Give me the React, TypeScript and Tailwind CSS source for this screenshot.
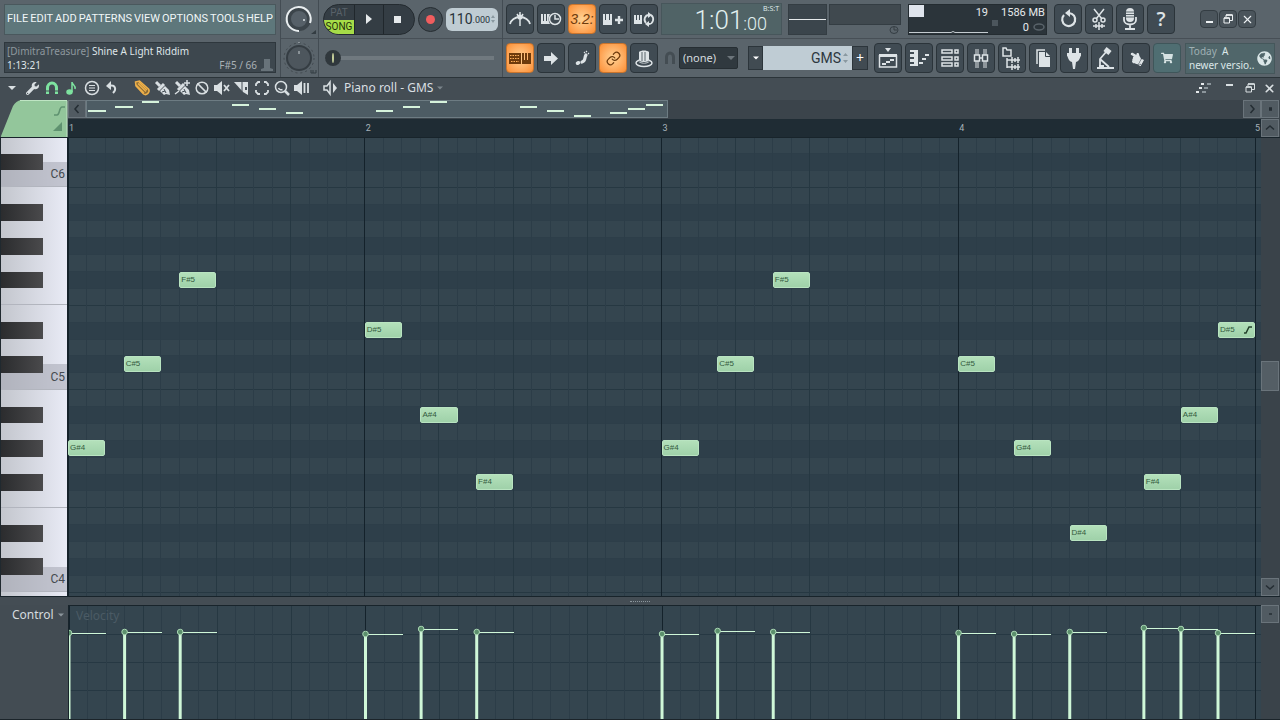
import type { ReactNode } from 'react';
import {
    Ban,
    Link,
    X,
} from 'lucide-react';
import { FaGlobeAmericas, FaHandPointLeft, FaShoppingCart, FaWrench } from 'react-icons/fa';

interface Note {
    name: string;
    step: number;
    pitch: number;
    velocity: number;
    slide?: boolean;
}

// pitch is a MIDI note number, step is a 16th from the start of the pattern
const NOTES: Note[] = [
    { name: 'G#4', step: 0, pitch: 56, velocity: 86 },
    { name: 'C#5', step: 3, pitch: 61, velocity: 87 },
    { name: 'F#5', step: 6, pitch: 66, velocity: 87 },
    { name: 'D#5', step: 16, pitch: 63, velocity: 85 },
    { name: 'A#4', step: 19, pitch: 58, velocity: 90 },
    { name: 'F#4', step: 22, pitch: 54, velocity: 87 },
    { name: 'G#4', step: 32, pitch: 56, velocity: 85 },
    { name: 'C#5', step: 35, pitch: 61, velocity: 88 },
    { name: 'F#5', step: 38, pitch: 66, velocity: 87 },
    { name: 'C#5', step: 48, pitch: 61, velocity: 86 },
    { name: 'G#4', step: 51, pitch: 56, velocity: 85 },
    { name: 'D#4', step: 54, pitch: 51, velocity: 87 },
    { name: 'F#4', step: 58, pitch: 54, velocity: 91 },
    { name: 'A#4', step: 60, pitch: 58, velocity: 90 },
    { name: 'D#5', step: 62, pitch: 63, velocity: 86, slide: true },
];

const VISIBLE_STEPS = 64.32;
const VISIBLE_ROWS = 27.15;
const TOP_PITCH = 74;
const TOP_CUT = 0.08;
const LANE_HEIGHT = 113;

const x = (step: number) => `${(step / VISIBLE_STEPS) * 100}%`;
const rowTop = (pitch: number) => `${((TOP_PITCH - pitch - TOP_CUT) / VISIBLE_ROWS) * 100}%`;
const rows = (n: number) => `${(n / VISIBLE_ROWS) * 100}%`;
const isBlack = (pitch: number) => [1, 3, 6, 8, 10].includes(pitch % 12);

const PITCHES = Array.from({ length: 28 }, (_, i) => TOP_PITCH - i);
const STEPS = Array.from({ length: 65 }, (_, i) => i);

/* ---------- icons ---------- */

const Glyph = ({ children }: { children: ReactNode }) => (
    <svg width="28" height="30" viewBox="0 0 28 30" fill="none" stroke="currentColor" strokeWidth="1.5" className="shrink-0">
        {children}
    </svg>
);

const Tool = ({ children }: { children: ReactNode }) => (
    <svg width="18" height="18" viewBox="0 0 18 18" fill="none" stroke="currentColor" strokeWidth="1.5">
        {children}
    </svg>
);

const MetronomeIcon = () => (
    <Glyph>
        <path strokeWidth="1.8" d="M4 20c1-4 5-7 10-7s9 3 10 7" />
        <path d="M14 8v14M11 10l3 5 3-5" />
        <circle cx="14" cy="13" r="1.8" fill="currentColor" />
    </Glyph>
);
const WaitIcon = () => (
    <Glyph>
        <path stroke="none" fill="currentColor" d="M4 10h2v7h1v-7h2v7h1v-7h3c-2 3-2 7 0 10H4z" />
        <circle cx="18" cy="15" r="5.5" />
        <path d="M18 11v4h4" />
    </Glyph>
);
const StepPlusIcon = () => (
    <Glyph>
        <path stroke="none" fill="currentColor" d="M4 10h2v6h1v-6h3v6h1v-6h2v11H4z" />
        <path strokeWidth="2.4" d="M16 16h8M20 12v8" />
    </Glyph>
);
const LoopIcon = () => (
    <Glyph>
        <path stroke="none" fill="currentColor" d="M4 11h2v5h1v-5h2v5h1v-5h2v9H4z" />
        <path strokeWidth="1.8" d="M16 19c-3-3-1-8 3-8M21 11c4 3 2 9-2 9" />
        <path stroke="none" fill="currentColor" d="M18 8l4 3-4 3zM19 17l-4 3 4 3z" />
    </Glyph>
);
const TypingIcon = () => (
    <Glyph>
        <path stroke="none" fill="currentColor" d="M3 10h12v11H3zM16 10h2v7h1v-7h2v7h1v-7h3v11h-9z" />
        <path stroke="#ffb15c" strokeWidth="1" strokeDasharray="1.5 1" d="M4 12.5h10M4 15.5h10M5 18.5h8" />
    </Glyph>
);
const ArrowIcon = () => (
    <Glyph>
        <path stroke="none" fill="currentColor" d="M7 13h7V9l7 6.5-7 6.5v-4H7z" />
    </Glyph>
);
const StepIcon = () => (
    <Glyph>
        <ellipse cx="10" cy="20" rx="2.4" ry="1.8" fill="currentColor" stroke="none" transform="rotate(-25 10 20)" />
        <path strokeWidth="3.2" strokeLinecap="round" d="M14 19c4-1 2-4 4-7" />
        <path strokeWidth="1.2" d="M16 10l1-1M18 9l1-1M20 11l1-1" />
    </Glyph>
);
const HatIcon = () => (
    <Glyph>
        <ellipse cx="14" cy="20" rx="8" ry="3.5" />
        <path stroke="none" fill="currentColor" d="M9 9c2-2 8-2 10 0v10c-2 2-8 2-10 0z" />
        <path stroke="#59646b" strokeWidth="1" d="M12 9v9M15 9v9M9 18c3 2 7 2 10 0" />
    </Glyph>
);
const PlaylistIcon = () => (
    <Glyph>
        <path stroke="none" fill="currentColor" d="M11 5h6l-3 4zM5 11h18v3H5z" />
        <path d="M5.5 12v12h17V12" />
        <path d="M8 21h4M12 19h4M16 17h4" strokeWidth="2" />
    </Glyph>
);
const PianoRollIcon = () => (
    <Glyph>
        <path stroke="none" fill="currentColor" d="M5 7h8v16H5v-2h4v-2H5v-3h4v-2H5v-3h4V9H5z" />
        <path strokeWidth="2.2" d="M14 20h4M17 16h4M20 12h4" />
    </Glyph>
);
const RackIcon = () => (
    <Glyph>
        <path d="M6 7h10v3H6zM6 14h10v3H6zM6 20h10v3H6zM19 7h3v3h-3zM19 14h3v3h-3zM19 20h3v3h-3z" />
    </Glyph>
);
const MixerIcon = () => (
    <Glyph>
        <path strokeWidth="1" d="M9 6v6M11 6v6M9 18v7M11 18v7M17 6v6M19 6v6M17 18v7M19 18v7" />
        <path d="M7.500 12h5v6h-5zM15.500 12h5v6h-5zM12 15h4" />
    </Glyph>
);
const BrowserIcon = () => (
    <Glyph>
        <path d="M5 6v7h8V7H9L8 5H5zM9 15v10M9 17h13M9 24h13" />
        <path d="M14 14v6M17 15v4M20 14v6M14 21v6M17 22v4M20 21v6" />
    </Glyph>
);
const PagesIcon = () => (
    <Glyph>
        <path d="M8 21V7h8" />
        <path stroke="none" fill="currentColor" d="M10 9h7l4 4v11H10z" />
        <path stroke="#38434b" strokeWidth="1" d="M16.5 9v4.500H21" />
    </Glyph>
);
const PlugIcon = () => (
    <Glyph>
        <path stroke="none" fill="currentColor" d="M9 5h3v5h4V5h3v5h2v3c-1 0-1 5-5 6l-1 7h-2l-1-7c-4-1-4-6-5-6v-3h2z" />
    </Glyph>
);
const LeverIcon = () => (
    <Glyph>
        <path strokeWidth="1.8" d="M15 9L9 16v8M9 16l9 8M6 25h17M8 23h5" />
        <path strokeWidth="5" d="M14 6l5 4" />
    </Glyph>
);
const TrimIcon = () => (
    <Glyph>
        <path d="M9 5l8 10M19 5l-8 10" />
        <circle cx="10" cy="16" r="2" />
        <circle cx="18" cy="16" r="2" />
        <path d="M8 22h12M11 20v4M14 18v8M17 20v4" />
    </Glyph>
);
const MicIcon = () => (
    <Glyph>
        <rect x="10" y="4" width="8" height="14" rx="4" fill="currentColor" stroke="none" />
        <path stroke="#59646b" strokeWidth="1" d="M10 8h8M10 10.500h8M10 13h8" />
        <path d="M8 13v3c0 6 12 6 12 0v-3M14 20v4M9 25h10" strokeWidth="1.8" />
    </Glyph>
);
const CycleIcon = () => (
    <Glyph>
        <path strokeWidth="2.2" d="M10 11a6.500 6.500 0 1 0 5-2" />
        <path stroke="none" fill="currentColor" d="M16 5v8l-5-4z" />
    </Glyph>
);
const BrushIcon = ({ plus }: { plus?: boolean }) => (
    <Tool>
        <path strokeWidth="3" d="M3 3l4 4" />
        <path strokeWidth="3" d="M5 11l6-6" />
        <path stroke="none" fill="currentColor" d="M7 12l5-5 4 4 1 5-4-1-2 1z" />
        <path stroke="#444d54" strokeWidth="1" d="M9 13l3-1M11 10l2 4" />
        {plus && <path d="M11 4h6M14 1v6M2 15l4-3" />}
    </Tool>
);
const SpeakerShape = () => <path stroke="none" fill="currentColor" d="M1 6h3l5-4v14l-5-4H1z" />;

const Caret = ({ className }: { className?: string }) => (
    <svg width="8" height="4" viewBox="0 0 8 4" className={className}>
        <path fill="currentColor" d="M0 0h8L4 4z" />
    </svg>
);

/* ---------- main toolbar ---------- */

interface IconButtonProps {
    label: string;
    children: ReactNode;
    variant?: 'dark' | 'active' | 'shop';
}

const VARIANTS = {
    dark: 'bg-[#404b53] text-[#dde3e6] border-[#2b343a]',
    active: 'bg-radial from-[#ffd394] to-[#fb8d2e] text-[#6e3b0c] border-[#c9742d]',
    shop: 'bg-[#4f6e72] text-[#d5e2e2] border-[#3f565a]',
};

const IconButton = ({ label, children, variant = 'dark' }: IconButtonProps) => (
    <button
        aria-label={label}
        className={`flex h-[30px] w-7 shrink-0 items-center justify-center overflow-hidden rounded-sm border ${VARIANTS[variant]}`}
    >
        {children}
    </button>
);

const MENU = ['FILE', 'EDIT', 'ADD', 'PATTERNS', 'VIEW', 'OPTIONS', 'TOOLS', 'HELP'];

const MenuPanel = () => (
    <div className="flex w-[281px] shrink-0 flex-col border-r border-[#434c53] px-1">
        <nav className="mt-1 flex h-[31px] items-center justify-between border border-[#4a585d] bg-[#5e777b] px-[2px] font-['Roboto',sans-serif] text-[11px] text-[#f0f6f7]">
            {MENU.map((item) => (
                <button key={item}>{item}</button>
            ))}
        </nav>
        <div className="mt-[7px] flex h-[31px] flex-col justify-center border border-[#2e373d] bg-[#3d474e] px-[2px] text-[10px] leading-[14px] text-[#dfe5e8]">
            <div>
                <span className="text-[#8d979d]">[DimitraTreasure]</span> Shine A Light Riddim
            </div>
            <div className="flex justify-between">
                <span>1:13:21</span>
                <span className="flex items-center gap-1 text-[#a9b1b6]">
                    F#5 / 66
                    <svg width="12" height="14" viewBox="0 0 12 14" className="text-[#68737a]">
                        <path fill="currentColor" d="M3 1h6v9l3 1v2H0v-2l3-1z" />
                    </svg>
                </span>
            </div>
        </div>
    </div>
);

const Knobs = () => (
    <div className="flex w-[38px] shrink-0 flex-col border-r border-[#434c53]">
        <div className="flex h-[39px] items-center justify-center border-b border-[#474f56]">
            <svg width="34" height="34" viewBox="0 0 34 34" fill="none" aria-label="Master volume">
                <circle cx="16" cy="17" r="10" fill="#566068" stroke="#3c454b" strokeWidth="4" />
                <path d="M16 29A12 12 0 1 1 27 21" stroke="#e9eef0" strokeWidth="2" />
                <circle cx="21" cy="18" r="1" fill="#dde3e6" />
                <path d="M33 28v4h-5z" fill="#333c42" />
            </svg>
        </div>
        <div className="flex h-[38px] items-center justify-center">
            <svg width="34" height="34" viewBox="0 0 34 34" fill="none" aria-label="Master pitch">
                <circle cx="16" cy="17" r="15" stroke="#41494f" strokeDasharray="2 3" />
                <circle cx="16" cy="17" r="12" fill="#4d565d" stroke="#353d43" strokeWidth="2" />
                <path d="M16 10v3M16 1v1" stroke="#c8cfd3" />
                <path d="M28 29v3h5v-3M30 29v3" stroke="#333c42" />
            </svg>
        </div>
    </div>
);

const Transport = () => (
    <div className="flex w-[184px] shrink-0 flex-col border-r border-[#434c53]">
        <div className="flex h-[39px] items-center gap-[3px] border-b border-[#474f56] pl-1">
            <div className="flex h-[31px] overflow-hidden rounded-full border border-[#242b30] bg-[#343d44]">
                <div className="flex w-[30px] flex-col pt-px text-center font-['Roboto',sans-serif] text-[10px] leading-[14px]">
                    <button className="h-[14px] text-[#59626a]">PAT</button>
                    <button className="h-[14px] bg-[#a6dc48] text-[#22310b]">SONG</button>
                </div>
                <button aria-label="Play" className="flex w-[29px] items-center justify-center border-l border-[#20272c]">
                    <svg width="6" height="10" viewBox="0 0 6 10"><path fill="#e6eaec" d="M0 0l6 5-6 5z" /></svg>
                </button>
                <button aria-label="Stop" className="flex w-[31px] items-center justify-center border-l border-[#20272c] pr-1">
                    <span className="size-[7px] bg-[#e6eaec]" />
                </button>
            </div>
            <button aria-label="Record" className="flex size-[25px] items-center justify-center rounded-full border border-[#262d32] bg-[#414b52]">
                <span className="size-[9px] rounded-full bg-[#f05d5e]" />
            </button>
            <div className="flex h-[23px] w-[52px] items-center justify-center rounded-md bg-[#bfccd3] font-['Roboto',sans-serif] text-[#28333a]">
                <span className="text-[14px]">110</span>
                <span className="pt-1 text-[9px]">.000</span>
                <svg width="4" height="8" viewBox="0 0 4 8" className="ml-px"><path fill="#8998a0" d="M0 3l2-3 2 3zM0 5h4L2 8z" /></svg>
            </div>
        </div>
        <div className="flex h-[38px] items-center pr-2 pl-1.5">
            <input
                type="range"
                aria-label="Song position"
                defaultValue={0}
                className="h-4 w-full appearance-none bg-transparent [&::-webkit-slider-runnable-track]:h-[4px] [&::-webkit-slider-runnable-track]:bg-[#70797f] [&::-webkit-slider-thumb]:-mt-[6px] [&::-webkit-slider-thumb]:size-4 [&::-webkit-slider-thumb]:appearance-none [&::-webkit-slider-thumb]:rounded-full [&::-webkit-slider-thumb]:border-x-[7px] [&::-webkit-slider-thumb]:border-y-[3px] [&::-webkit-slider-thumb]:border-[#30383d] [&::-webkit-slider-thumb]:bg-[#c5cf9b]"
            />
        </div>
    </div>
);

const Recording = () => (
    <div className="flex w-[158px] shrink-0 flex-col">
        <div className="flex h-[39px] items-center gap-[3px] border-b border-[#474f56] pl-[3px]">
            <IconButton label="Metronome"><MetronomeIcon /></IconButton>
            <IconButton label="Wait for input"><WaitIcon /></IconButton>
            <IconButton label="Countdown" variant="active">
                <span className="font-['Liberation_Sans'] text-sm italic">3.2:</span>
            </IconButton>
            <IconButton label="Overdub"><StepPlusIcon /></IconButton>
            <IconButton label="Loop recording"><LoopIcon /></IconButton>
        </div>
        <div className="flex h-[38px] items-center gap-[3px] pl-[3px]">
            <IconButton label="Typing keyboard" variant="active"><TypingIcon /></IconButton>
            <IconButton label="Auto scroll"><ArrowIcon /></IconButton>
            <IconButton label="Step edit"><StepIcon /></IconButton>
            <IconButton label="Link" variant="active"><Link size={15} strokeWidth={2} /></IconButton>
            <IconButton label="Metronome hat"><HatIcon /></IconButton>
        </div>
    </div>
);

const WindowButton = ({ label, children }: { label: string; children: ReactNode }) => (
    <button aria-label={label} className="flex size-[18px] items-center justify-center rounded-sm border border-[#343d43] bg-[#4a545b] text-[#eef2f4]">
        {children}
    </button>
);

const RestoreIcon = () => (
    <svg width="10" height="10" viewBox="0 0 10 10" fill="none" stroke="currentColor">
        <path d="M3 3V1h6.500v5.500H7M1 4h5.500v5H1z" />
        <path strokeWidth="1.5" d="M3 1h6.500M1 4h5.500" />
    </svg>
);

const TopRight = () => (
    <div className="flex h-[39px] items-center border-b border-[#474f56]">
        <div className="flex h-8 w-[121px] shrink-0 justify-end border border-[#47565b] bg-[#506366] font-['Roboto',sans-serif] text-[#e2f0f0]">
            <span className="text-[26px] leading-8 font-light">1:01</span>
            <span className="pt-2 text-[18px] leading-6 font-light">:00</span>
            <span className="-ml-1 pr-0.5 font-['Open_Sans'] text-[7px] leading-[9px]">B:S:T</span>
        </div>
        <div className="ml-1.5 flex h-[31px] w-[39px] items-center border border-[#343d43] bg-[#3b454c]">
            <div className="h-px w-full bg-[#e6eaec]" />
        </div>
        <div className="ml-0.5 flex h-[31px] w-[72px] flex-col items-end">
            <div className="h-[21px] w-full border border-[#343d43] bg-[#40494f]" />
            <svg width="12" height="10" viewBox="0 0 12 10" fill="none" stroke="#343d43">
                <ellipse cx="5" cy="5" rx="4" ry="3.5" /><path d="M5 2v3h3" />
            </svg>
        </div>
        <div className="ml-[7px] flex h-[31px] w-[139px] justify-between border border-[#242c31] bg-[#2b343a] font-['Roboto',sans-serif] text-[11px] leading-[15px] text-[#e6eaec]">
            <div className="flex w-[79px] flex-col justify-between">
                <div className="flex justify-between">
                    <span className="h-3 w-[15px] bg-[#dfe4ec]" />
                    <span>19</span>
                </div>
                <svg viewBox="0 0 79 4" className="h-1 w-full" fill="none" stroke="#c4cbd0"><path d="M0 2.500h42l2-1 2 1h33" /></svg>
            </div>
            <span className="mt-[15px] size-[6px] bg-[#4c565d]" />
            <div className="pr-px text-right whitespace-nowrap">
                1586 MB
                <div className="flex items-center justify-end gap-1">
                    0
                    <svg width="12" height="8" viewBox="0 0 12 8" fill="none" stroke="#59636a" strokeWidth="1.5"><ellipse cx="6" cy="4" rx="5" ry="3" /></svg>
                </div>
            </div>
        </div>
        <div className="ml-[7px] flex gap-[3px]">
            <IconButton label="Undo"><CycleIcon /></IconButton>
            <IconButton label="Cut"><TrimIcon /></IconButton>
            <IconButton label="Record audio"><MicIcon /></IconButton>
            <IconButton label="Help"><span className="font-['Open_Sans'] text-xl leading-7 font-semibold">?</span></IconButton>
        </div>
        <div className="mr-6 ml-auto flex gap-px">
            <WindowButton label="Minimize"><span className="mt-1.5 h-0.5 w-[7px] bg-current" /></WindowButton>
            <WindowButton label="Restore"><RestoreIcon /></WindowButton>
            <WindowButton label="Close"><X size={13} /></WindowButton>
        </div>
    </div>
);

const BottomRight = () => (
    <div className="flex h-[38px] items-center">
        <svg width="12" height="14" viewBox="0 0 12 14" fill="none" stroke="#444d53" strokeWidth="3" className="ml-[3px]">
            <path d="M2.500 13V6a3.500 4 0 0 1 7 0v7" />
        </svg>
        <label className="relative ml-[3px] flex items-center">
            <select aria-label="Snap" className="h-[22px] w-[59px] appearance-none rounded-xs border border-[#262e33] bg-[#30393f] pl-[3px] text-[11px] text-[#d5dbdf]">
                <option>(none)</option>
            </select>
            <Caret className="pointer-events-none absolute right-[3px] text-[#6c757b]" />
        </label>
        <button aria-label="Pattern menu" className="ml-2.5 flex h-6 w-[15px] items-center justify-center border border-[#2c353b] bg-[#414b52] text-white">
            <Caret className="w-1.5" />
        </button>
        <div className="flex h-6 w-[89px] items-center bg-[#bfccd4] pr-1">
            <input aria-label="Pattern" defaultValue="GMS" className="w-full min-w-0 text-right font-['Roboto',sans-serif] text-[14px] text-[#2d383f]" />
            <svg width="5" height="10" viewBox="0 0 5 10" className="ml-0.5 shrink-0"><path fill="#8998a0" d="M0 3l2.500-3L5 3zM0 7h5l-2.500 3z" /></svg>
        </div>
        <button aria-label="Add pattern" className="flex h-6 w-4 items-center justify-center border border-[#2c353b] bg-[#414b52] text-sm text-white">+</button>
        <div className="ml-1.5 flex gap-[3px]">
            <IconButton label="Playlist"><PlaylistIcon /></IconButton>
            <IconButton label="Piano roll"><PianoRollIcon /></IconButton>
            <IconButton label="Channel rack"><RackIcon /></IconButton>
            <IconButton label="Mixer"><MixerIcon /></IconButton>
            <IconButton label="Browser"><BrowserIcon /></IconButton>
            <IconButton label="Project picker"><PagesIcon /></IconButton>
            <IconButton label="Plugins"><PlugIcon /></IconButton>
            <IconButton label="Performance"><LeverIcon /></IconButton>
            <IconButton label="Touch"><FaHandPointLeft size={15} className="rotate-[30deg]" /></IconButton>
            <IconButton label="Shop" variant="shop"><FaShoppingCart size={12} /></IconButton>
        </div>
        <a href="#news" className="mr-[5px] ml-1 flex h-[31px] min-w-0 flex-1 items-center border border-[#45575b] bg-[#50666a] pl-[3px] text-[10px] leading-[14px] text-[#dbe7e8]">
            <span className="min-w-0 flex-1 whitespace-nowrap">
                <span className="text-[#9fb0b3]">Today</span> &nbsp;A
                <br />
                newer versio..
            </span>
            <FaGlobeAmericas size={15} className="mr-[2px] shrink-0" />
        </a>
    </div>
);

/* ---------- piano roll ---------- */

const ToolButton = ({ label, children }: { label: string; children: ReactNode }) => (
    <button aria-label={label} className="flex h-5 w-5 shrink-0 items-center justify-center">
        {children}
    </button>
);

const RollHeader = () => (
    <div className="flex h-[22px] items-center bg-[#444d54] pb-0.5 pl-0.5 text-[#d9dfe2]">
        <ToolButton label="Piano roll menu"><Caret /></ToolButton>
        <ToolButton label="Tools"><FaWrench size={13} /></ToolButton>
        <ToolButton label="Snap to grid">
            <span className="text-[#7ee3a0]">
                <Tool><path strokeWidth="3" d="M4.500 15V9a4.500 5 0 0 1 9 0v6" /><path stroke="#444d54" d="M2 12h14" strokeWidth="1" /></Tool>
            </span>
        </ToolButton>
        <ToolButton label="Stamp">
            <span className="text-[#7ee3a0]">
                <Tool><ellipse cx="6.5" cy="13" rx="2.5" ry="2" fill="currentColor" /><path d="M9 13V3c0 3 4 3 3 7" /></Tool>
            </span>
        </ToolButton>
        <ToolButton label="Options"><Tool><circle cx="9" cy="9" r="6.5" /><path d="M6 6.500h6M6 9h6M6 11.500h6" strokeWidth="1.2" /></Tool></ToolButton>
        <ToolButton label="Undo"><Tool><path strokeWidth="2" d="M6 7c6-2 8 3 4 7" /><path fill="currentColor" stroke="none" d="M8 2v9L3 7z" /></Tool></ToolButton>
        <div className="w-2.5" />
        <ToolButton label="Draw">
            <span className="text-[#eeb04a]">
                <Tool><path d="M2.500 3l4-1 9 8c2 3-2 7-5 5L3 7z" fill="#8a6a34" /><path d="M6 3l8 8M3 6l8 8M5 4.500l8 8" /></Tool>
            </span>
        </ToolButton>
        <ToolButton label="Paint"><BrushIcon /></ToolButton>
        <ToolButton label="Paint sequence"><BrushIcon plus /></ToolButton>
        <ToolButton label="Delete"><Ban size={14} strokeWidth={2.5} /></ToolButton>
        <ToolButton label="Mute"><Tool><SpeakerShape /><path d="M11 6l5 6M16 6l-5 6" strokeWidth="1.8" /></Tool></ToolButton>
        <ToolButton label="Slice"><Tool><path fill="currentColor" stroke="none" d="M1 3h14v13l-5-3z" /><path stroke="#444d54" d="M9 3v10" strokeWidth="1" /><path fill="#444d54" stroke="none" d="M12 8h2v3h-2z" /></Tool></ToolButton>
        <ToolButton label="Select"><Tool><path d="M3 7V5l2-2h2M11 3h2l2 2v2M15 11v2l-2 2h-2M7 15H5l-2-2v-2" strokeWidth="1.8" /></Tool></ToolButton>
        <ToolButton label="Zoom"><Tool><circle cx="8" cy="8" r="5.5" /><path d="M5.500 9a3 3 0 0 0 4 1.500" /><path strokeWidth="2.5" d="M12 12l4 4" /></Tool></ToolButton>
        <ToolButton label="Playback"><Tool><SpeakerShape /><path d="M11.500 4v10M15 4v10" strokeWidth="1.8" /></Tool></ToolButton>
        <button className="ml-2.5 flex items-center gap-1 text-[12px] leading-5">
            <Tool><path d="M2 7h3l3-4v12l-3-4H2z" /><path fill="currentColor" stroke="none" d="M11 4l4 5-4 5z" /></Tool>
            Piano roll - GMS
            <Caret className="w-1.5 text-[#7b858b]" />
        </button>
        <div className="ml-auto flex items-center gap-[5px] pr-1">
            <svg width="16" height="10" viewBox="0 0 16 10" strokeWidth="2" fill="none" className="mr-1">
                <path stroke="#e6eaec" d="M0 9h3M3 5h3M5 1h3" />
                <path stroke="#8c969c" d="M6 9h4M8 5h4M11 1h4" />
            </svg>
            <button aria-label="Minimize piano roll" className="flex size-4 items-start justify-center pt-1"><span className="h-0.5 w-[7px] bg-current" /></button>
            <button aria-label="Restore piano roll" className="flex w-4 justify-center"><RestoreIcon /></button>
            <button aria-label="Close piano roll"><X size={13} strokeWidth={3} /></button>
        </div>
    </div>
);

const ScrollButton = ({ label, d }: { label: string; d: string }) => (
    <button aria-label={label} className="flex h-[18px] w-full items-center justify-center border border-[#6a747b] bg-[#515b62] text-[#242d33]">
        <svg width="10" height="10" viewBox="0 0 10 10" fill="none" stroke="currentColor" strokeWidth="1.5"><path d={d} /></svg>
    </button>
);

const Overview = () => (
    <div className="flex h-[37px]">
        <svg width="68" height="37" viewBox="0 0 68 37" className="shrink-0 bg-[#444d54]">
            <path d="M1 36L13 6Q16 1 21 0h46v37H1z" fill="#93c69b" />
            <path d="M20 .5h47V37" fill="none" stroke="#bfe5c4" />
            <path d="M54 15h3c3 0 2-8 5-8h3" fill="none" stroke="#5f9270" strokeWidth="1.5" />
            <path d="M62 22v9h-9z" fill="#5f9270" />
        </svg>
        <div className="flex min-w-0 flex-1 flex-col">
            <div className="flex h-[19px] bg-[#3b444b] pb-px">
                <div className="w-[18px]"><ScrollButton label="Scroll left" d="M6.500 1L3 5l3.500 4" /></div>
                <div className="flex-1">
                    <div className="relative h-[18px] w-[50.3%] border border-[#6d7c83] bg-[#4d5c64]">
                        {NOTES.map((note) => (
                            <span
                                key={note.step}
                                className="absolute h-0.5 w-[3%] bg-[#d6f3dc]"
                                style={{ left: `${0.2 + note.step * 1.55}%`, top: `${(67 - note.pitch) * 5.7 - 5}%` }}
                            />
                        ))}
                    </div>
                </div>
                <div className="w-[18px]"><ScrollButton label="Scroll right" d="M3.500 1L7 5 3.500 9" /></div>
            </div>
            <div className="flex h-[18px] items-center bg-[#1f2c34] pt-px font-['Roboto',sans-serif] text-[9px] text-[#a6b2b9]">
                {[1, 2, 3, 4].map((bar) => (
                    <span key={bar} className="shrink-0 pl-px" style={{ width: x(16) }}>{bar}</span>
                ))}
                <span>5</span>
            </div>
        </div>
        <div className="flex w-[19px] shrink-0 flex-col gap-px bg-[#3b444b] pr-px">
            <ScrollButton label="Zoom" d="M4 5h3M4 4h3M4 6h3" />
            <ScrollButton label="Scroll up" d="M1 6.500L5 3l4 3.500" />
        </div>
    </div>
);

const Keyboard = () => (
    <div className="relative w-[68px] shrink-0 overflow-hidden border-r border-l border-l-[#20292f] border-r-[#16222a] bg-linear-to-r from-[#c3c6cd] to-[#e9ebf6]">
        {PITCHES.filter((p) => p % 12 === 0 || p % 12 === 5).map((p) => (
            <div
                key={p}
                className={`absolute w-full border-b border-[#b2b5be] ${p % 12 === 0 ? 'bg-[#9d9fab]/50' : ''}`}
                style={{ top: rowTop(p + 0.5), height: rows(1.5) }}
            >
                {p % 12 === 0 && (
                    <span className="flex h-full items-center justify-end pr-0.5 font-['Roboto',sans-serif] text-[12px] text-[#454a50]">C{p / 12}</span>
                )}
            </div>
        ))}
        {PITCHES.filter(isBlack).map((p) => (
            <div
                key={p}
                className="absolute w-[42px] bg-linear-to-r from-[#2b2c2e] to-[#4a4a4c]"
                style={{ top: rowTop(p), height: rows(1) }}
            />
        ))}
    </div>
);

const stepColor = (step: number) => {
    if (step % 16 === 0) return '#14222b';
    return step % 4 === 0 ? '#263842' : '#2c3d48';
};

const StepLines = () => (
    <>
        {STEPS.map((s) => (
            <line key={s} x1={x(s)} x2={x(s)} y1="0" y2="100%" stroke={stepColor(s)} />
        ))}
    </>
);

const NoteGrid = () => (
    <div className="relative min-w-0 flex-1 overflow-hidden bg-[#34454f]">
        <svg className="absolute size-full" shapeRendering="crispEdges">
            {PITCHES.filter(isBlack).map((p) => (
                <rect key={p} y={rowTop(p)} width="100%" height={rows(1)} fill="#2e3f4a" />
            ))}
            {PITCHES.map((p) => (
                <line key={p} x2="100%" y1={rowTop(p)} y2={rowTop(p)} stroke={p % 12 === 11 || p % 12 === 4 ? '#263842' : '#2d3e49'} />
            ))}
            <StepLines />
        </svg>
        {NOTES.map((note) => (
            <div
                key={note.step}
                className="absolute flex items-center justify-between rounded-xs border border-[#b9e4c1] bg-linear-to-b from-[#b3e0ba] to-[#9fd1a9] pr-0.5 pl-px font-['Liberation_Sans'] text-[8px] text-[#345a3e]"
                style={{ left: x(note.step), top: rowTop(note.pitch), width: x(2), height: rows(0.95) }}
            >
                {note.name}
                {note.slide && (
                    <svg width="8" height="8" viewBox="0 0 8 8" fill="none" stroke="#23402b" strokeWidth="1.5"><path d="M0 7h2l3-6h3" /></svg>
                )}
            </div>
        ))}
    </div>
);

const VelocityLane = () => (
    <div className="flex h-[115px] border-b border-[#1b242a]">
        <div className="w-[68px] shrink-0 bg-[#434c53]">
            <button className="ml-3 flex items-center gap-1 text-[12px] leading-5 text-[#d5dbdf]">
                Control <Caret className="w-1.5 text-[#8c969c]" />
            </button>
        </div>
        <div className="relative min-w-0 flex-1 overflow-hidden border-t border-l border-[#18242b] bg-[#34454f]">
            <svg className="absolute size-full">
                <g shapeRendering="crispEdges">
                    {[1, 2, 3].map((n) => (
                        <line key={n} x2="100%" y1={`${n * 25}%`} y2={`${n * 25}%`} stroke="#263843" />
                    ))}
                    <StepLines />
                </g>
                {NOTES.map(({ step, velocity }) => {
                    const y = LANE_HEIGHT - velocity;
                    return (
                        <g key={step} stroke="#cff7d8">
                            <line x1={x(step)} x2={x(step + 2)} y1={y} y2={y} shapeRendering="crispEdges" />
                            <line x1={x(step)} x2={x(step)} y1={y} y2="100%" strokeWidth="3" />
                            <circle cx={x(step)} cy={y} r="2.8" fill="#5b8f6c" stroke="#a9d6b3" />
                        </g>
                    );
                })}
            </svg>
            <span className="relative block pl-[7px] text-[12px] leading-5 text-[#4b5b65]">Velocity</span>
        </div>
        <div className="w-[19px] shrink-0 bg-[#3a434a] pr-px">
            <ScrollButton label="Lane options" d="M4 5h3" />
        </div>
    </div>
);

export default function App() {
    return (
        <div className="flex min-h-screen w-full flex-col overflow-hidden bg-[#444d54] font-['Noto_Sans','Open_Sans',sans-serif] select-none">
            <header className="flex h-[78px] border-b border-[#2b3439] bg-[#5a646b]">
                <MenuPanel />
                <Knobs />
                <Transport />
                <Recording />
                <div className="flex min-w-0 flex-1 flex-col">
                    <TopRight />
                    <BottomRight />
                </div>
            </header>
            <RollHeader />
            <Overview />
            <main className="flex min-h-[360px] flex-1 border-y border-[#18242b]">
                <Keyboard />
                <NoteGrid />
                <div className="flex w-[19px] shrink-0 flex-col bg-[#3a434a] pr-px">
                    <div className="flex-1" />
                    <button aria-label="Scroll thumb" className="h-[30px] border border-[#6a747b] bg-[#545e65]" />
                    <div className="h-[187px]" />
                    <ScrollButton label="Scroll down" d="M1 3.500L5 7l4-3.500" />
                </div>
            </main>
            <div className="flex h-2 items-center justify-center">
                <span className="w-5 border-t border-dotted border-[#8c969c]" />
            </div>
            <VelocityLane />
        </div>
    );
}
